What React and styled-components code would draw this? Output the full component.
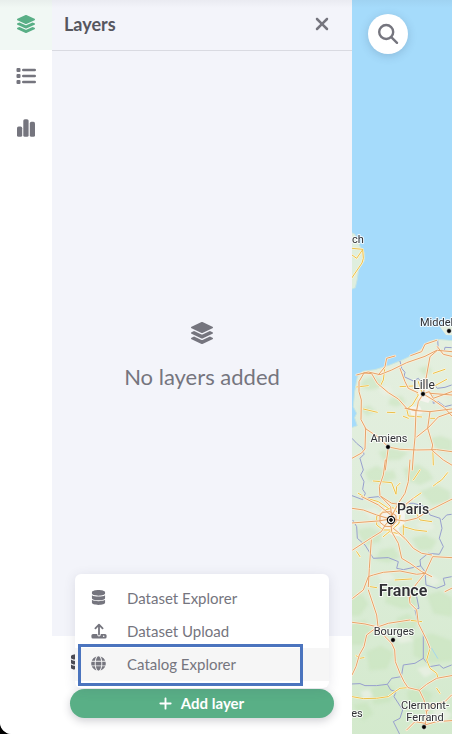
import React from "react";
import styled, { createGlobalStyle, css } from "styled-components";
import { FaLayerGroup, FaDatabase, FaGlobe } from "react-icons/fa";
import { FaXmark, FaPlus } from "react-icons/fa6";

const GlobalStyle = createGlobalStyle`
  *, *::before, *::after { box-sizing: border-box; }
  body { margin: 0; background: #000; }
  button, input { font: inherit; color: inherit; }
`;

const Shell = styled.div`
  position: relative;
  display: flex;
  min-height: 100vh;
  overflow: hidden;
  border-bottom-left-radius: 12px;
  background: #fff;
  color: #75757e;
  font-family: Lato, "Open Sans", sans-serif;

  &::before {
    content: "";
    position: absolute;
    z-index: 5;
    inset: 0 0 auto;
    height: 8px;
    background: linear-gradient(rgba(60, 60, 80, 0.05), transparent);
    pointer-events: none;
  }
`;

const Rail = styled.nav`
  display: flex;
  flex-direction: column;
  gap: 2px;
  width: 52px;
  flex: none;
  background: #fff;
`;

const PlainButton = styled.button`
  display: flex;
  align-items: center;
  justify-content: center;
  padding: 0;
  border: 0;
  background: none;
  cursor: pointer;
`;

const RailButton = styled(PlainButton)`
  height: 50px;
  padding-bottom: 2px;
  color: #75757e;
  ${({ $active }) => $active && css`
    background: #f1f8f4;
    color: #59af86;
  `}
`;

const Panel = styled.section`
  position: relative;
  display: flex;
  flex-direction: column;
  flex: 0 0 300px;
  background: #f3f4fa;
`;

const PanelHeader = styled.header`
  display: flex;
  align-items: center;
  justify-content: space-between;
  height: 51px;
  padding: 0 20px 2px 12px;
  border-bottom: 1px solid #d9dae1;
`;

const PanelTitle = styled.h2`
  margin: 0;
  color: #56565e;
  font-size: 18px;
  font-weight: 700;
  line-height: 24px;
`;

const CloseButton = styled(PlainButton)`
  width: 20px;
  height: 20px;
`;

const EmptyState = styled.div`
  display: flex;
  flex: 1;
  flex-direction: column;
  align-items: center;
  justify-content: center;
  gap: 19px;
  padding-top: 26px;
`;

const EmptyText = styled.p`
  margin: 0;
  font-size: 22px;
  line-height: 28px;
`;

const PanelFooter = styled.footer`
  display: flex;
  flex-direction: column;
  gap: 18px;
  padding: 18px 18px 16px;
  background: #fff;
`;

const FooterTools = styled.div`
  display: flex;
  height: 17px;
  color: #4c4c54;
`;

const AddButton = styled(PlainButton)`
  gap: 8px;
  height: 29px;
  padding: 0 2px 1px 0;
  border-radius: 15px;
  background: #59af86;
  color: #fff;
  font-size: 15px;
  font-weight: 700;
  box-shadow: 0 3px 8px rgba(40, 40, 60, 0.22);
`;

const Menu = styled.div`
  position: absolute;
  z-index: 2;
  right: 23px;
  bottom: 46px;
  left: 23px;
  padding: 8px 0 7px;
  border-radius: 6px;
  background: #fff;
  box-shadow: 0 2px 12px rgba(60, 60, 90, 0.13);
`;

const MenuItem = styled(PlainButton)`
  position: relative;
  justify-content: flex-start;
  gap: 20px;
  width: 100%;
  height: 33px;
  padding: 0 0 2px 15px;
  font-size: 15px;
  ${({ $highlighted }) => $highlighted && css`
    background: #f6f6f6;
    &::after {
      content: "";
      position: absolute;
      inset: -4px 26px -5px 3px;
      border: 3px solid #4b74be;
    }
  `}
`;

const MenuIcon = styled.span`
  display: flex;
  justify-content: center;
  width: 17px;
`;

const MapPane = styled.main`
  position: relative;
  flex: 1;
  min-width: 0;
  background: #a5dbfb;
`;

const MapDrawing = styled.svg`
  position: absolute;
  inset: 0;
  width: 100%;
  height: 100%;
  text {
    font-family: Roboto, "Noto Sans", sans-serif;
    fill: #303035;
    stroke: #fff;
    stroke-width: 2px;
    stroke-linejoin: round;
    paint-order: stroke;
    stroke-opacity: 0.8;
  }
`;

const SearchButton = styled(PlainButton)`
  position: absolute;
  top: 14px;
  left: 16px;
  width: 40px;
  height: 40px;
  border-radius: 50%;
  background: #fff;
  box-shadow: 0 2px 10px rgba(40, 60, 90, 0.2);
`;

const ListIcon = () => (
  <svg width="20" height="18" viewBox="0 0 20 18" fill="currentColor" aria-hidden="true">
    {[1, 7, 13].map((y) => (
      <g key={y}>
        <rect x="0.5" y={y} width="4" height="4" rx="1" />
        <rect x="6" y={y + 0.8} width="14" height="2.4" rx="1.2" />
      </g>
    ))}
  </svg>
);

const ChartIcon = () => (
  <svg width="18" height="18" viewBox="0 0 18 18" fill="currentColor" aria-hidden="true">
    <rect x="0" y="7.6" width="5.2" height="10.2" rx="1.6" />
    <rect x="6.3" y="0.2" width="5.3" height="17.6" rx="1.6" />
    <rect x="12.8" y="2.8" width="5.2" height="15" rx="1.6" />
  </svg>
);

const UploadIcon = () => (
  <svg width="16" height="16" viewBox="0 0 16 16" aria-hidden="true">
    <path d="M8 11.5V2M4.4 5.3L8 1.6l3.6 3.7" fill="none" stroke="currentColor" strokeWidth="1.8" strokeLinecap="round" strokeLinejoin="round" />
    <path fill="currentColor" fillRule="evenodd" d="M2 11h4.3v.8a1.7 1.7 0 0 0 3.4 0V11H14a1.6 1.6 0 0 1 1.6 1.6v1.3a1.6 1.6 0 0 1-1.6 1.6H2a1.6 1.6 0 0 1-1.6-1.6v-1.3A1.6 1.6 0 0 1 2 11zm10.7 1.5a.8.8 0 1 0 0 1.6.8.8 0 0 0 0-1.6z" />
  </svg>
);

const SearchIcon = () => (
  <svg width="22" height="22" viewBox="0 0 22 22" fill="none" stroke="currentColor" strokeWidth="2.4" strokeLinecap="round" aria-hidden="true">
    <circle cx="9.2" cy="9" r="7" />
    <path d="M14.3 14.2l5.7 5.6" />
  </svg>
);

const LAND = "M0 610L22 602 14 578 20 565 10 545 14 500 22 456 38 439 75 434 120 420 155 406 190 389 214 372 235 350 262 343 320 348V1600H0Z";

const FORESTS = [
  "M40 465l30-12 28 15-5 22-38 5-25-10zM120 520l35-8 12 20-28 14-24-8zM205 430l30-8 12 18-25 12zM30 550l28-9 20 18-28 13zM240 640l30-7 36 12v35l-45-5zM85 680l40-10 50 12-25 22-50 2z",
  "M45 740l35-18 30 18 20-5 10 25-40 12-45-5zM160 730l45-12 30 20 15 24-40 18-38-14zM210 800l50-20 40 20v30l-55 10zM20 915l40-8 35 17-5 28-45 7zM185 940l40-10 35 16-15 28-40 2zM90 975l40-8 20 28-35 18-40-8z",
  "M0 1115l35-8 20 30-25 35H0zM110 1090l52-10 35 22 3 42-42 8-52-18zM230 1110l40-12 36 20v58l-55-10zM50 1280l42-18 40 22-22 48-52 4zM190 1240l55-15 61 22v60l-70 6-45-20z",
  "M0 1200l45-15 20 33-25 42H0zM65 1390l40-16 30 20-14 37-50 8zM170 1400l40-15 38 22-16 40-52 4zM10 1440l40-8 20 33-30 22zM140 1180l35-15 25 30-18 45-37-12z",
];

const CLEARINGS = [
  "M80 490l38-10 12 22-28 12zM250 520l35-6 8 18-28 10zM95 635l38-7 22 20-42 10zM40 855l38-7 20 23-38 10zM195 895l48-6 12 22-36 8zM80 1050l35-9 22 18-34 16z",
  "M220 1060l30-8 22 18-24 14zM130 1230l40-7 22 24-42 8zM200 1330l32-7 20 20-28 14zM30 1400l26-7 14 21-28 8zM250 1455l30-6 26 20-20 22-36-8z",
];

const ROADS_NORTH = "M182 392L215 380 225 358 260 346M262 365L280 388 305 394M20 450L42 444 55 441 90 449 125 435 170 413 225 394 260 376M6 700L35 684 45 672 47 610 33 584 34 525 27 500 27 470 42 444M42 444L65 446 82 475 115 503 145 522 170 550 190 556 240 560 305 552M45 610L84 636 115 666 150 673 200 675 260 674 305 680M115 666L106 735M198 558L195 638 190 690 187 735M220 506L238 500 250 520 305 500M220 506L205 530 200 556 165 550M220 506L230 450 240 395 262 376 305 380M150 430L165 470 175 490 203 503M220 507L250 525 283 548 305 572M240 560L233 610 248 660 245 675 280 705 305 720M200 636L235 608 265 576 305 562M240 505L305 510M85 450L105 425 110 400 135 393";
const ROADS_PARIS = "M106 705L100 750 88 785 90 812 122 845 125 880 106 900 94 920 65 938 8 975M180 705L175 770 165 805 145 835 122 880M6 850L40 855 80 870 120 882M6 894L85 888 122 882 165 888 200 880 235 858 305 823M122 882L125 920 145 955 155 1000 180 1015 215 1040 245 1055M64 945L58 1030 55 1085M8 1120L40 1095 55 1055 70 1050 100 1042 150 1038 200 1048 225 1045 248 995 305 998M130 910L165 940 190 970 215 985 245 990M90 872L90 892 105 904 125 905 138 890 138 872 120 860 100 862zM94 815L125 835 165 840 190 820M225 1045L205 1070 185 1095 180 1120M35 815L85 840 120 868";
const ROADS_SOUTH = "M55 1095L65 1125 80 1170 84 1205 105 1235 125 1255 134 1275 136 1310 150 1345 162 1370 174 1388 208 1396 230 1378 260 1360 305 1352M6 1192L45 1197 83 1206 115 1195 180 1185M83 1205L50 1230 42 1265 28 1290 18 1325 6 1350M176 1100L180 1135 200 1155 205 1195 230 1245 240 1270M208 1396L222 1425 230 1465 225 1510M225 1500L260 1490 305 1487M225 1495L195 1490 170 1515M230 1460L250 1440 285 1430 305 1410M285 1100L305 1090";
const MAIN_ROADS = [ROADS_NORTH, ROADS_PARIS, ROADS_SOUTH].join("");
const LOCAL_ROADS = "M6 70L38 73 40 100 36 114 6 158M38 74L20 100 6 90M20 486L55 482M40 552L82 562M112 562L135 563M105 425L100 465 90 485M150 485L190 483M190 492L205 510 187 540 170 552 175 573 215 576M250 445L285 433M160 574L175 580M250 485L290 463M205 470L215 500M235 580L255 580M248 660L250 720M70 768L125 773 138 808 140 785 150 775M190 765L200 750 210 735M250 783L260 775 275 765 293 743M25 805L50 820 85 830 115 850M170 835L190 820 213 804M145 835L190 850 210 885 245 890M80 875L80 900 100 915 125 915 147 895 150 872 130 848 105 855 80 875M160 905L195 915 230 919M160 930L160 900M20 980L30 995M60 1085L80 1088M135 1065L185 1062M100 935L118 920 145 926 165 943M170 1185L215 1190M18 1292L30 1300 42 1298M180 1135L193 1148M240 1270L230 1305 240 1330 260 1345 264 1360M6 1415L40 1421 80 1420 115 1415 135 1400 150 1390 174 1388M240 1435L250 1450M260 1390L270 1405";
const BORDERS = "M263 345L265 375 283 377 285 367 305 368M150 408L155 430 165 442 162 455 190 468 205 460 220 480 252 478 262 490 285 487 305 480M248 510L250 535 265 530 285 545 305 540M6 640L20 655 38 670 42 688 30 700 40 735 32 750 42 770 38 793 46 805 38 824 6 812M38 820L85 815 125 835 190 835 225 845 240 870 270 880 276 910 268 940 280 965 268 988 235 985 210 1005 212 1023 160 1034 140 1030 145 1010 115 998 70 1000 45 960 22 940 20 905 8 885M276 885L290 870 305 868M210 1020L225 1040 228 1080 260 1090 285 1080 280 1060 305 1055M180 1100L200 1115 207 1150 195 1155 205 1195 220 1220 220 1300 195 1315 160 1320 154 1355 125 1360 112 1378 80 1382 45 1382 30 1376 6 1377M220 1300L240 1325 268 1320 280 1330 305 1320M112 1378L122 1395 138 1400 132 1415 158 1455 150 1480 130 1490 150 1530";

const CITIES = [
  { name: ["ch"], x: 6, y: 243, size: 11, anchor: "middle" },
  { name: ["Middel"], x: 68, y: 326, size: 11, dot: [97, 331] },
  { name: ["Lille"], x: 72, y: 389, size: 12, anchor: "middle", dot: [71, 394] },
  { name: ["Amiens"], x: 37, y: 442, size: 11, anchor: "middle", dot: [36, 447] },
  { name: ["Bourges"], x: 42, y: 635, size: 11, anchor: "middle", dot: [41, 640] },
  { name: ["Clermont-", "Ferrand"], x: 73, y: 709, size: 11, anchor: "middle", dot: [72, 727] },
  { name: ["es"], x: 5, y: 717, size: 11, anchor: "middle" },
];

const FranceMap = () => (
  <MapDrawing viewBox="0 0 100 734" preserveAspectRatio="xMinYMin slice" role="img" aria-label="Map of northern France">
    <defs>
      <filter id="soft"><feGaussianBlur stdDeviation="5" /></filter>
      <linearGradient id="ground" x1="0" y1="0" x2="0" y2="1">
        <stop offset="0" stopColor="#e4efdf" />
        <stop offset="0.45" stopColor="#deedda" />
        <stop offset="1" stopColor="#d2e9cb" />
      </linearGradient>
    </defs>
    <g transform="translate(-2 225) scale(.3333)">
      <path d="M0 20L15 28 23 46 30 64 44 83 44 106 26 133 22 162 16 188 0 195z" fill="#dfeede" stroke="#c5e4e4" strokeWidth="3" />
      <path d="M270 306L290 300 320 308V332L288 330z" fill="#e5efdf" />
      <path d={LAND} fill="url(#ground)" stroke="#cae6df" strokeWidth="3" />
      <g filter="url(#soft)">
        {FORESTS.map((d) => <path key={d} d={d} fill="#c5e4ba" opacity=".5" />)}
        {CLEARINGS.map((d) => <path key={d} d={d} fill="#e8f0e2" opacity=".9" />)}
      </g>
      <path d="M88 865L100 848 130 846 165 860 164 895 145 910 155 935 125 930 92 905zM205 485L235 488 245 515 235 534 205 525zM178 545L210 544 218 565 185 574z" fill="#f5f4ee" />
      <path d={BORDERS} fill="none" stroke="#979fce" strokeWidth="3" strokeLinejoin="round" />
      <g fill="none" strokeLinecap="round" strokeLinejoin="round">
        <path d={LOCAL_ROADS} stroke="#fff8df" strokeWidth="6" />
        <path d={LOCAL_ROADS} stroke="#ebc04a" strokeWidth="3" />
        <path d={MAIN_ROADS} stroke="#fcf0dc" strokeWidth="7" />
        <path d={MAIN_ROADS} stroke="#e6a369" strokeWidth="3" />
        <path d="M245 1270L263 1300" stroke="#a5d7ec" strokeWidth="3" />
      </g>
    </g>
    {CITIES.map(({ name, x, y, size, anchor, dot }) => (
      <g key={name[0]}>
        {dot && <circle cx={dot[0]} cy={dot[1]} r="2.4" fill="#000" stroke="#fff" strokeWidth=".6" />}
        <text fontSize={size} textAnchor={anchor}>
          {name.map((line, i) => <tspan key={line} x={x} y={y + i * 12}>{line}</tspan>)}
        </text>
      </g>
    ))}
    <g fill="#fff" stroke="#111">
      <circle cx="39" cy="520" r="3.6" strokeWidth="1.2" />
      <circle cx="39" cy="520" r="1.4" fill="#111" />
    </g>
    <text x="45" y="514" fontSize="14" fontWeight="500">Paris</text>
    <text x="51" y="596" fontSize="16" fontWeight="600" textAnchor="middle">France</text>
  </MapDrawing>
);

const MENU_OPTIONS = [
  { label: "Dataset Explorer", icon: <FaDatabase size={15} /> },
  { label: "Dataset Upload", icon: <UploadIcon /> },
  { label: "Catalog Explorer", icon: <FaGlobe size={15} />, highlighted: true },
];

export default function App() {
  return (
    <>
      <GlobalStyle />
      <Shell>
        <Rail aria-label="Tools">
          <RailButton $active aria-label="Layers" aria-pressed="true"><FaLayerGroup size={18} /></RailButton>
          <RailButton aria-label="Legend"><ListIcon /></RailButton>
          <RailButton aria-label="Charts"><ChartIcon /></RailButton>
        </Rail>
        <Panel>
          <PanelHeader>
            <PanelTitle>Layers</PanelTitle>
            <CloseButton aria-label="Close"><FaXmark size={20} /></CloseButton>
          </PanelHeader>
          <EmptyState>
            <FaLayerGroup size={22} />
            <EmptyText>No layers added</EmptyText>
          </EmptyState>
          <Menu role="menu">
            {MENU_OPTIONS.map(({ label, icon, highlighted }) => (
              <MenuItem key={label} role="menuitem" $highlighted={highlighted}>
                <MenuIcon>{icon}</MenuIcon>
                {label}
              </MenuItem>
            ))}
          </Menu>
          <PanelFooter>
            <FooterTools><FaDatabase size={16} /></FooterTools>
            <AddButton><FaPlus size={15} />Add layer</AddButton>
          </PanelFooter>
        </Panel>
        <MapPane>
          <FranceMap />
          <SearchButton aria-label="Search"><SearchIcon /></SearchButton>
        </MapPane>
      </Shell>
    </>
  );
}
